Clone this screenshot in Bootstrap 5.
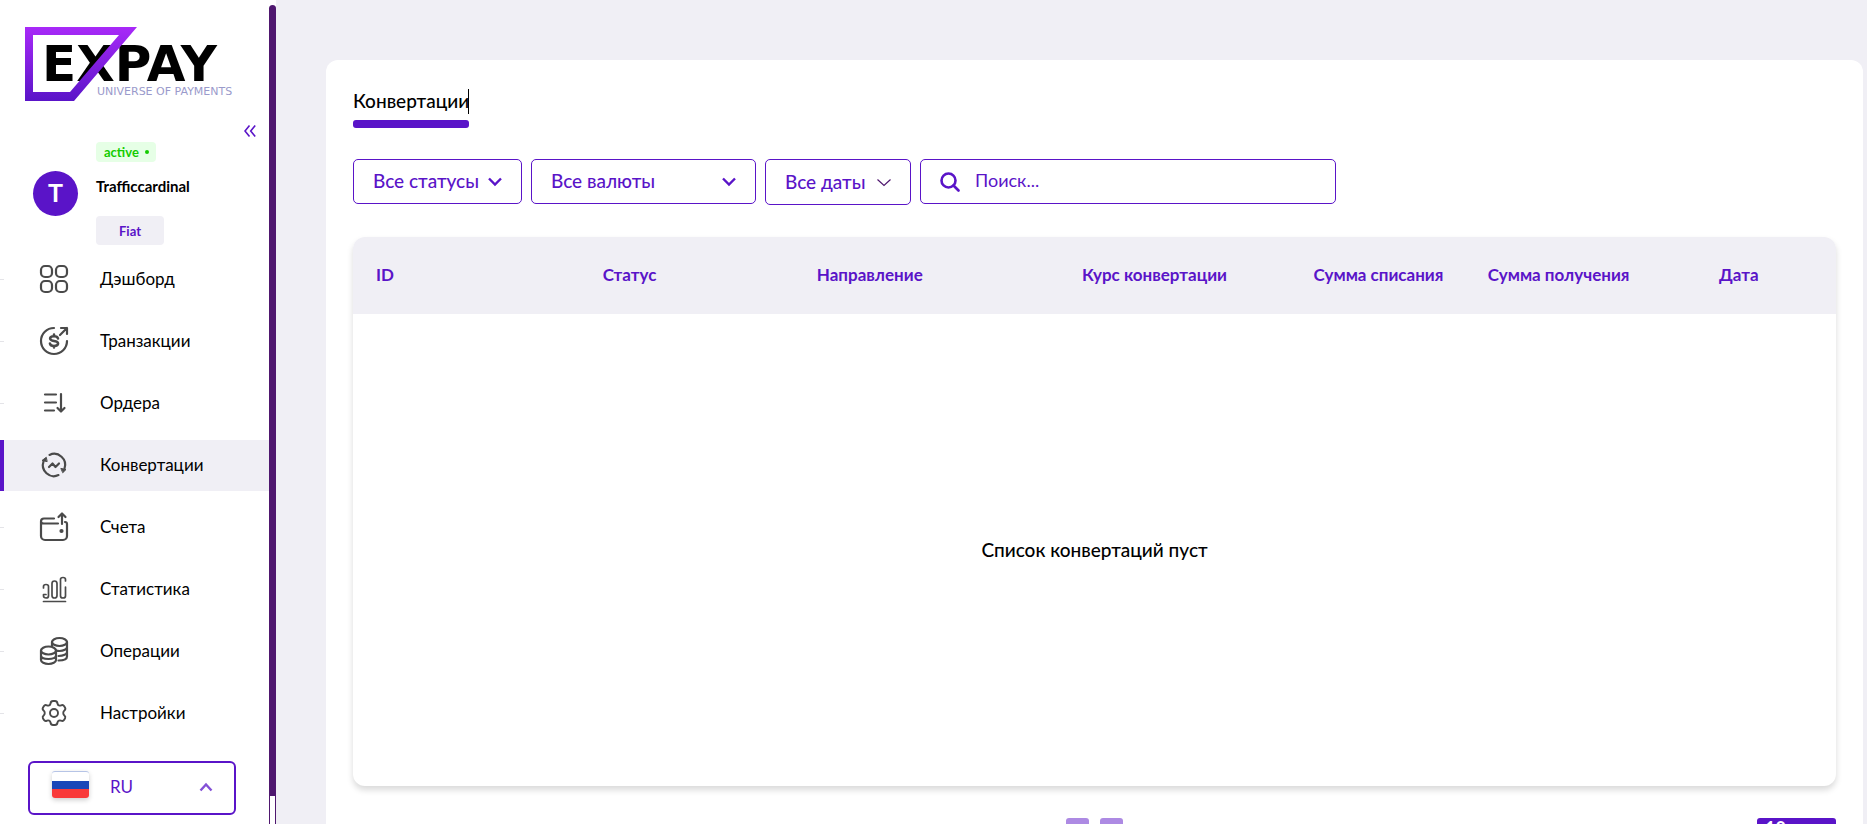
<!DOCTYPE html>
<html lang="ru">
<head>
<meta charset="utf-8">
<meta name="viewport" content="width=device-width, initial-scale=1">
<title>EXPAY — Конвертации</title>
<link href="https://cdn.jsdelivr.net/npm/bootstrap@5.3.0/dist/css/bootstrap.min.css" rel="stylesheet">
<style>
:root{--violet:#5a14c8;--mist:#f0eff5;--rail:#4f176f}
body{font-family:Lato,"Open Sans",sans-serif;background:var(--mist);color:#000;height:100vh;overflow:hidden}
.side{width:276px;height:100vh;background:#fff}
.side-body{width:269px}
.rail{width:7px;padding-top:5px}
.rail-thumb{background:var(--rail);border-radius:4px 4px 0 0;height:calc(100vh - 33px)}
.rail-track{border:solid var(--rail);border-width:0 1px}
.logo{display:block;margin:27px 0 0 25px}
.fold{height:12px;margin:23px 13px 0 0;color:var(--violet)}
.profile{margin:5px 0 0 33px;gap:18px}
.avatar{width:45px;height:45px;background:var(--violet);color:#fff;font-size:25px;font-weight:700;line-height:43px}
.state{background:#e6ffe6;color:#14cc00;font-size:13px;font-weight:700;line-height:20px;padding:0 7px 0 8px;border-radius:4px}
.dot{width:4px;height:4px;background:#14cc00;margin-left:6px}
.user{font-size:15px;font-weight:700;line-height:20px;margin:14px 0 20px}
.fiat{background:var(--mist);color:var(--violet);font-size:13px;font-weight:700;line-height:28px;height:29px;width:68px;border-radius:4px}
.menu{margin-top:9px;gap:11px}
.menu a{height:51px;padding:0 0 1px 36px;gap:28px;font-size:17px;color:#000;text-decoration:none;position:relative}
.menu a::before{content:"";position:absolute;left:0;top:25px;width:4px;height:1px;background:#e4e4e8}
.menu a.active{background:var(--mist)}
.menu a.active::before{top:0;height:51px;background:var(--violet)}
.menu svg{fill:none;stroke:#4a4a4a;stroke-width:2.2;stroke-linecap:round;stroke-linejoin:round}
.lang{width:208px;height:54px;margin:22px 0 0 28px;padding:0 21px 2px 22px;gap:21px;border:2px solid var(--violet);border-radius:6px;color:var(--violet);font-size:17px;background:#fff}
.flag{width:37px;height:27px;margin-bottom:5px;border-radius:3px;border:1px solid #b6c4e6;border-width:1px 0 0;background:linear-gradient(#fff 33%,#1a47b8 33% 67%,#f93939 67%);box-shadow:0 2px 5px #0003}
.panel{margin:60px 4px 0 50px;padding:27px 27px 0;background:#fff;border-radius:12px;height:100vh}
.tab-title{font-size:19px;line-height:28px;font-weight:500;color:#000;text-decoration:none;position:relative}
.tab-title::after{content:"";display:block;height:8px;margin-top:5px;border-radius:3px;background:var(--violet)}
.caret{position:absolute;right:0;top:2px;width:1px;height:25px;background:#000}
.filters{margin-top:31px;gap:9px}
.filters .box{height:45px;border:1px solid var(--violet);border-radius:5px;color:var(--violet);font-size:19px;font-weight:500;background-color:#fff}
.filters select.box{padding:0 0 0 19px;background-image:url("data:image/svg+xml,%3Csvg xmlns='http://www.w3.org/2000/svg' width='14' height='10' fill='none' stroke='%235a14c8' stroke-width='2.4'%3E%3Cpath d='M1 1.5l6 6 6-6'/%3E%3C/svg%3E");background-repeat:no-repeat;background-position:right 19px center;background-size:14px 10px}
.w-status{width:169px}.w-cur{width:225px}.w-date{width:146px}.w-find{width:416px}
.filters .w-date{height:46px;padding:0 19px}
.filters .w-find{padding:0 19px;gap:15px}
.w-find input{border:0;outline:0;background:none;color:var(--violet);font-size:18px;padding:0 0 2px;min-width:0}
.w-find input::placeholder{color:var(--violet);opacity:1}
.sheet{margin-top:32px;border-radius:12px;overflow:hidden;box-shadow:0 4px 6px #00000026}
.sheet table{table-layout:fixed}
.sheet th{height:77px;background:var(--mist);color:var(--violet);font-size:17px;font-weight:700;text-align:center;vertical-align:middle;border:0;padding:0 0 2px;white-space:nowrap}
.sheet th:first-child{text-align:left;padding-left:23px}
.sheet td{height:472px;border:0;text-align:center;vertical-align:middle;font-size:19px;font-weight:500;color:#000}
.pager{margin-top:32px;display:grid;grid-template-columns:1fr auto 1fr}
.pager .steps{gap:11px}
.pager .step{width:23px;height:28px;border:0;border-radius:3px;background:#ad8ae3}
.pager select{width:79px;height:24px;border:0;border-radius:3px;background:var(--violet);color:#fff;font-size:18px;line-height:20px;font-weight:700;padding:0 8px 4px;appearance:none}
</style>
</head>
<body class="d-flex">
<aside class="side d-flex flex-shrink-0 overflow-hidden">
  <div class="side-body d-flex flex-column flex-shrink-0">
    <svg class="logo flex-shrink-0" width="220" height="75" viewBox="0 0 220 75" role="img" aria-label="EXPAY">
      <defs><linearGradient id="lg" x1="0" y1="0" x2="0" y2="1"><stop offset="0" stop-color="#a829f8"/><stop offset="1" stop-color="#5a14c8"/></linearGradient></defs>
      <text x="17" y="54" font-family="DejaVu Sans" font-weight="700" font-size="50">EXPAY</text>
      <path fill="url(#lg)" fill-rule="evenodd" d="M0 0H112L49 74H0ZM8 8V65H45L94 8Z"/>
      <text x="72" y="68" font-family="DejaVu Sans" font-size="11" fill="#9a9acb">UNIVERSE OF PAYMENTS</text>
    </svg>
    <button class="fold btn p-0 border-0 align-self-end d-flex" aria-label="Свернуть меню">
      <svg width="12" height="12" fill="none" stroke="currentColor" stroke-width="1.6"><path d="M5.500 .5L1 6l4.500 5.500M11.200 .5L6.700 6l4.500 5.500"/></svg>
    </button>
    <div class="profile d-flex align-items-center">
      <div class="avatar rounded-circle text-center">T</div>
      <div class="d-flex flex-column align-items-start">
        <span class="state d-flex align-items-center">active<span class="dot rounded-circle"></span></span>
        <span class="user">Trafficcardinal</span>
        <button class="fiat btn p-0 border-0">Fiat</button>
      </div>
    </div>
    <nav class="menu d-flex flex-column">
      <a href="#" class="d-flex align-items-center"><svg width="36" height="36" viewBox="0 0 36 36"><rect x="5" y="5" width="11" height="11" rx="4"/><rect x="20" y="5" width="11" height="11" rx="4"/><rect x="5" y="20" width="11" height="11" rx="4"/><rect x="20" y="20" width="11" height="11" rx="4"/></svg>Дэшборд</a>
      <a href="#" class="d-flex align-items-center"><svg width="36" height="36" viewBox="0 0 36 36"><path d="M18 5a13 13 0 1 0 13 13M24 12l7-7M25 5h6v6"/><path stroke-width="2.500" d="M22 15.500c-.4-1.600-1.800-2.300-4-2.300-2.300 0-3.900.8-3.900 2.400 0 3.600 8 1.300 8 5 0 1.500-1.600 2.400-4.100 2.400-2.300 0-3.800-.8-4.100-2.500M18 11.500v1.500m0 10v1.500"/></svg>Транзакции</a>
      <a href="#" class="d-flex align-items-center"><svg width="36" height="36" viewBox="0 0 36 36"><path d="M9 9.500h11M9 17.500h11M9 25.500h9M25 9v17M21.500 23l3.500 3.500 3.500-3.500"/></svg>Ордера</a>
      <a href="#" class="active d-flex align-items-center" aria-current="page"><svg width="36" height="36" viewBox="0 0 36 36"><path d="M13.500 7.900A11 11 0 0 1 28.500 21.500M22.500 28.100A11 11 0 0 1 7.500 14.500M13 20l3.500-3.500 3 3.500 3.500-3.500"/><path fill="#4a4a4a" stroke-width="1" d="M25.200 21.500L30 22.500 27 25.500ZM10.800 14.500L6 13.500 10 10.500Z"/></svg>Конвертации</a>
      <a href="#" class="d-flex align-items-center"><svg width="36" height="36" viewBox="0 0 36 36"><path d="M18 9.500H8a3 3 0 0 0-3 3V27a4 4 0 0 0 4 4h18a4 4 0 0 0 4-4V15c0-1-.8-2-2-2M22 14.500H8c-2 0-3-1-3-2M26 15V5M22.500 8L26 4.500 29.500 8"/><circle cx="25.500" cy="22" r="1" fill="#4a4a4a"/></svg>Счета</a>
      <a href="#" class="d-flex align-items-center"><svg width="36" height="36" viewBox="0 0 36 36"><g stroke-width="1.700"><path d="M7.500 30.500h22M7.500 17v-1.500c0-1.300 1-2 2.500-2s2.500.8 2.500 2V25c0 1.200-1 2-2.500 2S7.500 26.200 7.500 25v-1.500h2.500"/><rect x="16" y="10" width="5" height="17" rx="2.500"/><path d="M29.500 10V8.500c0-1.300-1-2-2.500-2s-2.500.8-2.500 2V25c0 1.200 1 2 2.500 2s2.500-.8 2.500-2V16"/></g></svg>Статистика</a>
      <a href="#" class="d-flex align-items-center"><svg width="36" height="36" viewBox="0 0 36 36"><ellipse cx="12.500" cy="17.500" rx="7.500" ry="4"/><path d="M5 17.500V27c0 2.200 3.400 4 7.500 4s7.500-1.800 7.500-4v-9.500M5 22.500c0 2.200 3.400 3.500 7.500 3.500s7.500-1.300 7.500-3.500"/><ellipse cx="23.500" cy="9" rx="7.500" ry="4"/><path d="M16 9v4M31 9v14.500c0 2.400-3.500 4-8.500 4M31 14c0 2.200-3.400 4-7.500 4-1.300 0-2.500-.2-3.500-.5M31 19c0 2.200-3.400 4-8.500 4"/></svg>Операции</a>
      <a href="#" class="d-flex align-items-center"><svg width="36" height="36" viewBox="0 0 36 36"><g stroke-width="1.900"><circle cx="18" cy="18" r="4"/><path d="M14.500 8.500c.3-2 1.300-2.500 2.500-2.500h2c1.200 0 2.200.5 2.500 2.500s2.200 2.500 3.500 1.800 2.500-.3 3.200.9l.9 1.500c.6 1.200.3 2.100-.9 3s-1.300 3.500 0 4.600 1.500 1.800.9 3l-.9 1.500c-.7 1.200-1.900 1.500-3.200.9s-3.200-.2-3.500 1.800-1.300 2.500-2.500 2.500h-2c-1.200 0-2.200-.5-2.500-2.500s-2.200-2.500-3.500-1.800-2.500.3-3.200-.9l-.9-1.500c-.6-1.200-.4-1.900.9-3s1.200-3.700 0-4.600-1.500-1.800-.9-3l.9-1.500c.7-1.200 1.900-1.600 3.200-.9s3.200.2 3.500-1.800Z"/></g></svg>Настройки</a>
    </nav>
    <button class="lang d-flex align-items-center flex-shrink-0"><span class="flag"></span>RU
      <svg class="ms-auto" width="14" height="10" fill="none" stroke="#8451d6" stroke-width="2.400"><path d="M1.500 8.500L7 2.500l5.500 6"/></svg></button>
  </div>
  <div class="rail d-flex flex-column"><div class="rail-thumb flex-shrink-0"></div><div class="rail-track flex-fill"></div></div>
</aside>
<main class="flex-fill">
  <section class="panel">
    <a href="#" class="tab-title d-inline-block">Конвертации<span class="caret"></span></a>
    <form class="filters d-flex">
      <select class="box form-select w-status" aria-label="Статус"><option>Все статусы</option></select>
      <select class="box form-select w-cur" aria-label="Валюта"><option>Все валюты</option></select>
      <button type="button" class="box w-date d-flex align-items-center justify-content-between">Все даты<svg width="14" height="9" fill="none" stroke="#4f176f" stroke-width="1.200"><path d="M.5 1.500L7 7.500l6.500-6"/></svg></button>
      <label class="box w-find d-flex align-items-center"><svg width="20" height="20" fill="none" stroke="#5a14c8" stroke-width="2.600" stroke-linecap="round"><circle cx="8.500" cy="8.500" r="7"/><path d="M13.500 13.500l5 5"/></svg><input class="flex-fill" type="text" placeholder="Поиск..." aria-label="Поиск"></label>
    </form>
    <div class="sheet">
      <table class="table mb-0">
        <colgroup><col style="width:13.1%"><col style="width:11.1%"><col style="width:21.3%"><col style="width:17.1%"><col style="width:13.1%"><col style="width:11.2%"><col style="width:13.1%"></colgroup>
        <thead><tr><th>ID</th><th>Статус</th><th>Направление</th><th>Курс конвертации</th><th>Сумма списания</th><th>Сумма получения</th><th>Дата</th></tr></thead>
        <tbody><tr><td colspan="7">Список конвертаций пуст</td></tr></tbody>
      </table>
    </div>
    <div class="pager"><span></span>
      <div class="steps d-flex"><button class="step" aria-label="Назад"></button><button class="step" aria-label="Вперёд"></button></div>
      <select class="ms-auto" aria-label="Строк на странице"><option>10</option></select>
    </div>
  </section>
</main>
<script src="https://cdn.jsdelivr.net/npm/bootstrap@5.3.0/dist/js/bootstrap.bundle.min.js"></script>
</body>
</html>
